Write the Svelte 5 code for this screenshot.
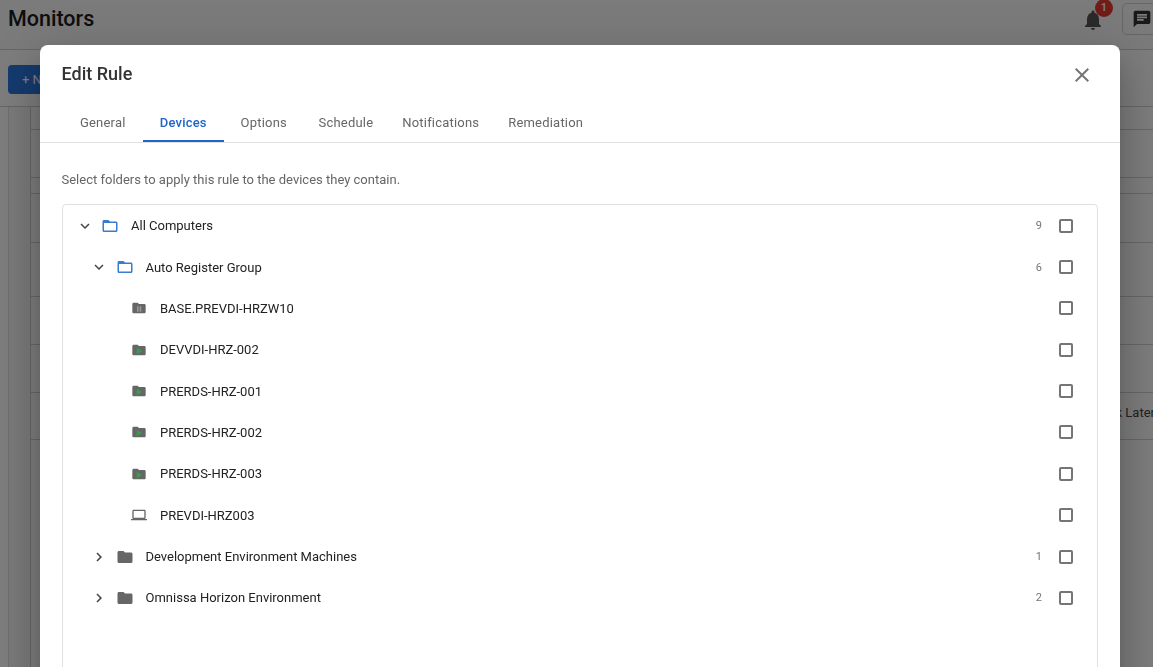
<script>
	const tabs = ['General', 'Devices', 'Options', 'Schedule', 'Notifications', 'Remediation'];

	const tree = [
		{ name: 'All Computers', depth: 0, icon: 'open', chevron: 'down', count: 9 },
		{ name: 'Auto Register Group', depth: 1, icon: 'open', chevron: 'down', count: 6 },
		{ name: 'BASE.PREVDI-HRZW10', depth: 2, icon: 'paused' },
		{ name: 'DEVVDI-HRZ-002', depth: 2, icon: 'running' },
		{ name: 'PRERDS-HRZ-001', depth: 2, icon: 'running' },
		{ name: 'PRERDS-HRZ-002', depth: 2, icon: 'running' },
		{ name: 'PRERDS-HRZ-003', depth: 2, icon: 'running' },
		{ name: 'PREVDI-HRZ003', depth: 2, icon: 'laptop' },
		{ name: 'Development Environment Machines', depth: 1, icon: 'closed', chevron: 'right', count: 1 },
		{ name: 'Omnissa Horizon Environment', depth: 1, icon: 'closed', chevron: 'right', count: 2 }
	];

	// rows of the monitor list behind the dialog
	const backRows = [
		{ h: 23 },
		{ h: 48 },
		{ h: 16 },
		{ h: 49 },
		{ h: 54 },
		{ h: 48 },
		{ h: 48 },
		{ h: 47, text: 'Check Later' },
		{ h: 240 }
	];
</script>

<div class="page">
	<header class="top">
		<h1>Monitors</h1>
		<div class="top-actions">
			<div class="bell">
				<svg width="24" height="24" viewBox="0 0 24 24"><path d="M12 22c1.1 0 2-.9 2-2h-4c0 1.1.9 2 2 2zm6-6v-5c0-3.07-1.63-5.64-4.5-6.32V4c0-.83-.67-1.5-1.5-1.5s-1.5.67-1.5 1.5v.68C7.64 5.36 6 7.92 6 11v5l-2 2v1h16v-1l-2-2z" fill="#555"/></svg>
				<span class="badge">1</span>
			</div>
			<div class="chat">
				<svg width="20" height="20" viewBox="0 0 24 24"><path d="M20 2H4c-1.1 0-2 .9-2 2v18l4-4h14c1.1 0 2-.9 2-2V4c0-1.1-.9-2-2-2zM6 9h12v2H6V9zm8 5H6v-2h8v2zm4-6H6V6h12v2z" fill="#333"/></svg>
			</div>
		</div>
	</header>
	<div class="toolbar">
		<button class="new" type="button">+ New</button>
	</div>
	<div class="list">
		{#each backRows as row}
			<div class="back-row" style="height: {row.h}px">
				{#if row.text}<span>{row.text}</span>{/if}
			</div>
		{/each}
	</div>
</div>

<div class="overlay"></div>

<div class="dialog">
	<div class="dialog-head">
		<h2>Edit Rule</h2>
		<svg class="close" width="24" height="24" viewBox="0 0 24 24"><path d="M19 6.41 17.59 5 12 10.59 6.41 5 5 6.41 10.59 12 5 17.59 6.41 19 12 13.41 17.59 19 19 17.59 13.41 12z" fill="#757575"/></svg>
	</div>

	<nav class="tabs">
		{#each tabs as tab}
			<div class="tab" class:active={tab === 'Devices'}>{tab}</div>
		{/each}
	</nav>

	<div class="body">
		<p class="hint">Select folders to apply this rule to the devices they contain.</p>
		<div class="tree">
			{#each tree as node}
				<div class="node depth-{node.depth}">
					<span class="chevron">
						{#if node.chevron === 'down'}
							<svg width="18" height="18" viewBox="0 0 24 24"><path d="M16.59 8.59 12 13.17 7.41 8.59 6 10l6 6 6-6z" fill="#444"/></svg>
						{:else if node.chevron === 'right'}
							<svg width="18" height="18" viewBox="0 0 24 24"><path d="M8.59 16.59 13.17 12 8.59 7.41 10 6l6 6-6 6z" fill="#444"/></svg>
						{/if}
					</span>
					<span class="icon">
						{#if node.icon === 'open'}
							<svg width="18" height="18" viewBox="0 0 24 24"><path d="M20 6h-8l-2-2H4c-1.1 0-1.99.9-1.99 2L2 18c0 1.1.9 2 2 2h16c1.1 0 2-.9 2-2V8c0-1.1-.9-2-2-2zm0 12H4V8h16v10z" fill="#3b7ad0"/></svg>
						{:else if node.icon === 'closed'}
							<svg width="18" height="18" viewBox="0 0 24 24"><path d="M10 4H4c-1.1 0-1.99.9-1.99 2L2 18c0 1.1.9 2 2 2h16c1.1 0 2-.9 2-2V8c0-1.1-.9-2-2-2h-8l-2-2z" fill="#666"/></svg>
						{:else if node.icon === 'paused'}
							<svg width="16" height="16" viewBox="0 0 24 24"><path d="M10 4H4c-1.1 0-1.99.9-1.99 2L2 18c0 1.1.9 2 2 2h16c1.1 0 2-.9 2-2V8c0-1.1-.9-2-2-2h-8l-2-2z" fill="#666"/><path d="M9 9.5h2.4v8H9zM13 9.5h2.4v8H13z" fill="#999"/></svg>
						{:else if node.icon === 'running'}
							<svg width="16" height="16" viewBox="0 0 24 24"><path d="M10 4H4c-1.1 0-1.99.9-1.99 2L2 18c0 1.1.9 2 2 2h16c1.1 0 2-.9 2-2V8c0-1.1-.9-2-2-2h-8l-2-2z" fill="#666"/><path d="M8.5 8.5v10l8-5z" fill="#35a04a"/></svg>
						{:else}
							<svg width="16" height="16" viewBox="0 0 24 24"><path d="M20 18c1.1 0 1.99-.9 1.99-2L22 6c0-1.1-.9-2-2-2H4c-1.1 0-2 .9-2 2v10c0 1.1.9 2 2 2H0v2h24v-2h-4zM4 6h16v10H4V6z" fill="#666"/></svg>
						{/if}
					</span>
					<span class="name">{node.name}</span>
					<span class="count">{node.count ?? ''}</span>
					<span class="check"></span>
				</div>
			{/each}
		</div>
	</div>
</div>

<style>
	:global(body) {
		margin: 0;
		font-family: Roboto, "Liberation Sans", sans-serif;
		overflow: hidden;
		height: 667px;
		background: #fafafa;
	}

	.page {
		height: 667px;
		overflow: hidden;
		color: #222;
	}

	.top {
		height: 49px;
		border-bottom: 1px solid #ccc;
		display: flex;
		align-items: center;
		justify-content: space-between;
		padding-left: 8px;
		background: #f7f7f7;
	}

	h1 {
		margin: 0 0 13px;
		font-size: 21.5px;
		font-weight: 500;
		color: #1c1c1c;
	}

	.top-actions {
		display: flex;
		align-items: center;
		gap: 17px;
		margin-right: -8px;
		margin-bottom: 18px;
	}

	.bell {
		position: relative;
		height: 24px;
		margin-top: 8px;
	}

	.badge {
		position: absolute;
		top: -9px;
		left: 14px;
		width: 18px;
		height: 18px;
		border-radius: 50%;
		background: #e53935;
		color: #fff;
		font-size: 11px;
		font-weight: 500;
		display: flex;
		align-items: center;
		justify-content: center;
	}

	.chat {
		width: 39px;
		height: 32px;
		border: 1px solid #ccc;
		border-radius: 5px;
		display: flex;
		align-items: center;
		padding-left: 9px;
		box-sizing: border-box;
		margin-top: 6px;
	}

	.toolbar {
		height: 57px;
		border-bottom: 1px solid #ccc;
		padding: 15px 0 0 8px;
		box-sizing: border-box;
		background: #fafafa;
	}

	.new {
		height: 29px;
		width: 120px;
		border: none;
		border-radius: 4px;
		background: #2877dd;
		color: #fff;
		font: 400 13px Roboto, sans-serif;
		text-align: left;
		padding-left: 14px;
	}

	.list {
		margin-left: 8px;
		padding-left: 21px;
		border-left: 1px solid #dcdcdc;
		background: #f5f5f5;
	}

	.back-row {
		box-sizing: border-box;
		border-bottom: 1px solid #cfcfcf;
		border-left: 1px solid #cfcfcf;
		background: #fafafa;
		display: flex;
		align-items: center;
		justify-content: flex-end;
		font-size: 13px;
		color: #444;
		white-space: nowrap;
	}

	.back-row span {
		margin: 0 -2px 8px 0;
	}

	.overlay {
		position: fixed;
		inset: 0;
		background: rgba(0, 0, 0, 0.5);
	}

	.dialog {
		position: fixed;
		left: 40px;
		top: 45px;
		width: 1080px;
		height: 700px;
		background: #fff;
		border-radius: 8px;
		color: #2b2b2b;
		will-change: transform;
		box-shadow: 0 11px 15px -7px rgba(0, 0, 0, 0.2), 0 24px 38px 3px rgba(0, 0, 0, 0.14), 0 9px 46px 8px rgba(0, 0, 0, 0.12);
	}

	.dialog-head {
		height: 58px;
		display: flex;
		align-items: center;
		justify-content: space-between;
		padding: 0 26px 0 21.5px;
	}

	h2 {
		margin: 0 0 2px;
		font-size: 18px;
		font-weight: 500;
		color: #333;
	}

	.close {
		margin-top: 2px;
	}

	.tabs {
		height: 39px;
		display: flex;
		border-bottom: 1px solid #e0e0e0;
		padding-left: 22.5px;
	}

	.tab {
		padding: 0 14.5px;
		min-width: 80.5px;
		box-sizing: border-box;
		text-align: center;
		font-size: 13px;
		font-weight: 400;
		letter-spacing: 0.2px;
		color: #666;
		line-height: 40px;
		height: 39px;
	}

	.tab.active {
		color: #1e66c8;
		font-weight: 500;
		border-bottom: 2px solid #1e66c8;
	}

	.body {
		padding: 0 22px;
	}

	.hint {
		margin: 0 0 0 -0.5px;
		padding-top: 29px;
		height: 32px;
		font-size: 13px;
		color: #666;
		line-height: 15px;
	}

	.tree {
		border: 1px solid #e0e0e0;
		border-radius: 4px;
		height: 600px;
		padding-right: 24px;
	}

	.node {
		height: 41.36px;
		display: flex;
		align-items: center;
		font-size: 13px;
		font-weight: 400;
		color: #222;
	}

	.node.depth-0 {
		padding-left: 13px;
	}

	.node.depth-1,
	.node.depth-2 {
		padding-left: 27px;
	}

	.chevron {
		width: 18px;
		height: 18px;
		margin-right: 7px;
	}

	.chevron svg,
	.icon svg {
		display: block;
	}

	.icon {
		width: 18px;
		height: 18px;
		margin-right: 12px;
		display: flex;
		align-items: center;
		justify-content: center;
	}

	.depth-1 .chevron {
		margin-right: 8px;
	}

	.depth-1 .icon {
		margin-right: 11.5px;
	}

	.depth-2 .chevron {
		width: 0;
		margin-right: 41px;
	}

	.depth-2 .icon {
		width: 16px;
		margin-right: 13px;
	}

	.name {
		flex: 1;
	}

	.count {
		font-size: 11px;
		font-weight: 400;
		color: #757575;
		width: 20px;
		text-align: right;
		margin-right: 17px;
	}

	.check {
		width: 10px;
		height: 10px;
		border: 2px solid #757575;
		border-radius: 2px;
	}
</style>
